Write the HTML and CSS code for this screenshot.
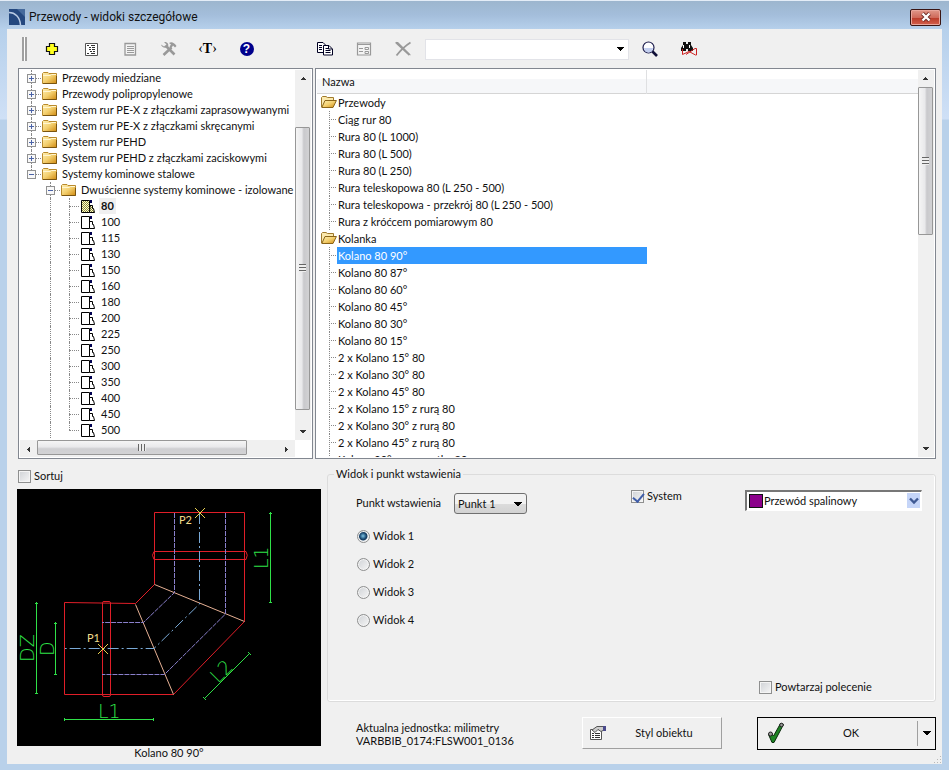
FILE: index.html
```html
<!DOCTYPE html>
<html lang="pl">
<head>
<meta charset="utf-8">
<title>Przewody - widoki szczegółowe</title>
<link rel="stylesheet" href="styles.css">
</head>
<body>
<svg class="defs" aria-hidden="true">
  <defs>
    <linearGradient id="gold" x1="0" y1="0" x2="1" y2="1">
      <stop offset="0" stop-color="#fff0b4"/><stop offset=".5" stop-color="#f3cf6e"/><stop offset="1" stop-color="#d08a10"/>
    </linearGradient>
    <pattern id="hatch" width="2" height="2" patternUnits="userSpaceOnUse">
      <rect width="2" height="2" fill="#fffbd0"/><rect width="1" height="1" fill="#8b8b3c"/><rect x="1" y="1" width="1" height="1" fill="#8b8b3c"/>
    </pattern>
    <symbol id="folder" viewBox="0 0 16 14">
      <path d="M.5 12.500V2.500L1.500 1.500H6L7 2.500H14.500V12.500Z" fill="url(#gold)" stroke="#b98a2c"/>
      <path d="M1 4.500H8L9.500 3.500H14" fill="none" stroke="#fff6d2"/>
      <path d="M1 12.500H14.500V5" fill="none" stroke="#7a5510"/>
    </symbol>
    <symbol id="folder-open" viewBox="0 0 16 14">
      <path d="M.5 12V2.500L1.500 1.500H5L6.500 2.500H12.500V5" fill="#fbe9ae" stroke="#a07a2c"/>
      <path d="M.8 12.500L4 5.500H15.400L12 12.500Z" fill="url(#gold)" stroke="#8a6418"/>
    </symbol>
    <symbol id="part" viewBox="0 0 16 14">
      <path d="M.5 1.500H8.500V13.500H.5Z" fill="#fff" stroke="#000"/>
      <path d="M9 1H11V4H9Z" fill="#000050"/>
      <path d="M9 6.500H11.500V9.500H12.500L13.500 13.500H8.500" fill="none" stroke="#000"/>
    </symbol>
    <symbol id="part-on" viewBox="0 0 16 14">
      <path d="M.5 1.500H8.500V13.500H.5Z" fill="url(#hatch)" stroke="#000"/>
      <path d="M9 1H11V4H9Z" fill="#000050"/>
      <path d="M9 6.500H11.500V9.500H12.500L13.500 13.500H8.500Z" fill="url(#hatch)" stroke="#000"/>
    </symbol>
  </defs>
</svg>

<div class="window">
  <header class="titlebar">
    <svg class="app-icon" viewBox="0 0 16 16" aria-hidden="true"><rect width="16" height="16" fill="#24487f"/><path d="M0 0H16V8L8 0Z" fill="#456a9c"/><path d="M0 3.500C6 3.500 11 8 11.500 16" fill="none" stroke="#b9cbe4" stroke-width="1.500"/></svg>
    <h1>Przewody - widoki szczegółowe</h1>
    <button class="close" aria-label="Zamknij"><svg viewBox="0 0 12 10" width="12" height="10"><path d="M2.500 1.500L9.500 8.500M9.500 1.500L2.500 8.500" stroke="#6b2a24" stroke-width="4"/><path d="M2.500 1.500L9.500 8.500M9.500 1.500L2.500 8.500" stroke="#fff" stroke-width="2.400"/></svg></button>
  </header>

  <main class="client">
    <div class="toolbar" role="toolbar" aria-label="Narzędzia">
      <span class="grip"></span>
      <button class="tool" aria-label="Dodaj"><svg viewBox="0 0 16 16"><path d="M5.500 2.500H10.500V5.500H13.500V10.500H10.500V13.500H5.500V10.500H2.500V5.500H5.500Z" fill="#ffff1e" stroke="#111" stroke-width="1.200"/></svg></button>
      <button class="tool" aria-label="Widok drzewa"><svg viewBox="0 0 16 16"><path d="M2.500 2.500H14.500V14.500H2.500Z" fill="#fff" stroke="#555"/><path d="M4 4.500H6M6 6.500H8M9 6.500H12M6 8.500H8M9 8.500H12M7 10.500H9M10 10.500H12M4 12.500H6M8 12.500H12M8 4.500H12" stroke="#333"/></svg></button>
      <button class="tool" aria-label="Lista" disabled><svg viewBox="0 0 16 16"><path d="M3 2.500H13.500V14H3Z" fill="#f4f4f4" stroke="#999" stroke-width="1.300"/><path d="M5 5.500H12M5 7.500H12M5 9.500H12M5 11.500H12" stroke="#999"/></svg></button>
      <button class="tool" aria-label="Ustawienia" disabled><svg viewBox="0 0 16 16"><path d="M5 5L13.500 13.500M10.500 6.500L2.500 14" stroke="#999" stroke-width="2.600"/><path d="M0 3.500L3 5.500L5.500 3.500L3 1C6.500 .5 8 3 7 6C4 7.500 .5 6.500 0 3.500Z" fill="#999"/><path d="M8 2C10 .5 13 1 15.500 5L14 6.500L12 4.500L10.500 7L8.500 5.500L10 3.500Z" fill="#999"/></svg></button>
      <button class="tool tool-text" aria-label="Tekst">‹<b>T</b>›</button>
      <button class="tool tool-help" aria-label="Pomoc"><b>?</b></button>
      <span class="tool-space"></span>
      <button class="tool" aria-label="Kopiuj"><svg viewBox="0 0 16 16"><path d="M.5 1.500H6L8.500 4V11.500H.5Z" fill="#fff" stroke="#002"/><path d="M6.500 4.500H12L15.500 8V14H6.500Z" fill="#fff" stroke="#002"/><path d="M2 4.500H5M2 6.500H5M2 8.500H5M8.500 7.500H11M8.500 9.500H13.500M8.500 11.500H13.500M11.500 4.500V8H15" fill="none" stroke="#002"/></svg></button>
      <button class="tool" aria-label="Formularz" disabled><svg viewBox="0 0 16 16"><path d="M1.500 2H14.500V14H1.500Z" fill="#f4f4f4" stroke="#999" stroke-width="1.200"/><path d="M2 3.500H14M3 7.500H7M3 10.500H7M9 6.500H12.500V8.500H9ZM9 10.500H12.500V12.500H9Z" fill="none" stroke="#999"/></svg></button>
      <button class="tool" aria-label="Usuń" disabled><svg viewBox="0 0 16 16"><path d="M0 1L3 1L15.500 13.500V14.500L12 12Z" fill="#999"/><path d="M1 1.500L14.500 14M15.500 1.500C10 5 5 10 1.500 14.500" fill="none" stroke="#999" stroke-width="1.800"/></svg></button>
      <select class="search" aria-label="Szukaj"><option></option></select>
      <button class="tool" aria-label="Znajdź"><svg viewBox="0 0 16 16"><circle cx="6.500" cy="6.500" r="5.500" fill="#fdfdff" stroke="#1c1c4c" stroke-width="1.200"/><path d="M2 7A4.500 4.500 0 0 0 11 7Z" fill="#c3cff0"/><path d="M10.500 10.500L15 15" stroke="#101038" stroke-width="2.600"/></svg></button>
      <button class="tool" aria-label="Wyczyść wyszukiwanie"><svg viewBox="0 0 16 16"><path d="M2 1H5V3H7V1H10V4L12 7V10H7V8H5V10H0V7L2 4Z" fill="#111"/><path d="M2.500 4V7M8.500 4V7" stroke="#fff"/><path d="M1.500 8V13.500L8 10.500L14.500 14H15.500V7.500H14L5 13.500" fill="none" stroke="#c22"/></svg></button>
    </div>

    <section class="panels">
      <div class="panel tree-panel">
        <div class="viewport">
          <ul class="tree" role="tree">
            <li><i class="cell v"><b class="box plus"></b></i><svg><use href="#folder"/></svg><span>Przewody miedziane</span></li>
            <li><i class="cell v"><b class="box plus"></b></i><svg><use href="#folder"/></svg><span>Przewody polipropylenowe</span></li>
            <li><i class="cell v"><b class="box plus"></b></i><svg><use href="#folder"/></svg><span>System rur PE-X z złączkami zaprasowywanymi</span></li>
            <li><i class="cell v"><b class="box plus"></b></i><svg><use href="#folder"/></svg><span>System rur PE-X z złączkami skręcanymi</span></li>
            <li><i class="cell v"><b class="box plus"></b></i><svg><use href="#folder"/></svg><span>System rur PEHD</span></li>
            <li><i class="cell v"><b class="box plus"></b></i><svg><use href="#folder"/></svg><span>System rur PEHD z złączkami zaciskowymi</span></li>
            <li><i class="cell end"><b class="box"></b></i><svg><use href="#folder"/></svg><span>Systemy kominowe stalowe</span></li>
            <li><i class="cell blank"></i><i class="cell v"><b class="box"></b></i><svg><use href="#folder"/></svg><span>Dwuścienne systemy kominowe - izolowane</span></li>
            <li class="leaf current"><i class="cell blank"></i><i class="cell line"></i><i class="cell v"></i><svg><use href="#part-on"/></svg><span>80</span></li>
            <li class="leaf"><i class="cell blank"></i><i class="cell line"></i><i class="cell v"></i><svg><use href="#part"/></svg><span>100</span></li>
            <li class="leaf"><i class="cell blank"></i><i class="cell line"></i><i class="cell v"></i><svg><use href="#part"/></svg><span>115</span></li>
            <li class="leaf"><i class="cell blank"></i><i class="cell line"></i><i class="cell v"></i><svg><use href="#part"/></svg><span>130</span></li>
            <li class="leaf"><i class="cell blank"></i><i class="cell line"></i><i class="cell v"></i><svg><use href="#part"/></svg><span>150</span></li>
            <li class="leaf"><i class="cell blank"></i><i class="cell line"></i><i class="cell v"></i><svg><use href="#part"/></svg><span>160</span></li>
            <li class="leaf"><i class="cell blank"></i><i class="cell line"></i><i class="cell v"></i><svg><use href="#part"/></svg><span>180</span></li>
            <li class="leaf"><i class="cell blank"></i><i class="cell line"></i><i class="cell v"></i><svg><use href="#part"/></svg><span>200</span></li>
            <li class="leaf"><i class="cell blank"></i><i class="cell line"></i><i class="cell v"></i><svg><use href="#part"/></svg><span>225</span></li>
            <li class="leaf"><i class="cell blank"></i><i class="cell line"></i><i class="cell v"></i><svg><use href="#part"/></svg><span>250</span></li>
            <li class="leaf"><i class="cell blank"></i><i class="cell line"></i><i class="cell v"></i><svg><use href="#part"/></svg><span>300</span></li>
            <li class="leaf"><i class="cell blank"></i><i class="cell line"></i><i class="cell v"></i><svg><use href="#part"/></svg><span>350</span></li>
            <li class="leaf"><i class="cell blank"></i><i class="cell line"></i><i class="cell v"></i><svg><use href="#part"/></svg><span>400</span></li>
            <li class="leaf"><i class="cell blank"></i><i class="cell line"></i><i class="cell v"></i><svg><use href="#part"/></svg><span>450</span></li>
            <li class="leaf"><i class="cell blank"></i><i class="cell line"></i><i class="cell end"></i><svg><use href="#part"/></svg><span>500</span></li>
          </ul>
        </div>
        <div class="bar vertical tree-v"><i class="arrow up"></i><div class="track"><div class="thumb"><i></i></div></div><i class="arrow down"></i></div>
        <div class="bar horizontal"><i class="arrow left"></i><div class="track"><div class="thumb"><i></i></div></div><i class="arrow right"></i></div>
      </div>

      <div class="panel list-panel">
        <div class="viewport">
          <div class="list-head"><span>Nazwa</span></div>
          <ul class="list">
            <li class="group"><svg><use href="#folder-open"/></svg><span>Przewody</span></li>
            <li><i></i><span>Ciąg rur 80</span></li>
            <li><i></i><span>Rura 80 (L 1000)</span></li>
            <li><i></i><span>Rura 80 (L 500)</span></li>
            <li><i></i><span>Rura 80 (L 250)</span></li>
            <li><i></i><span>Rura teleskopowa 80 (L 250 - 500)</span></li>
            <li><i></i><span>Rura teleskopowa - przekrój 80 (L 250 - 500)</span></li>
            <li><i></i><span>Rura z króćcem pomiarowym 80</span></li>
            <li class="group"><svg><use href="#folder-open"/></svg><span>Kolanka</span></li>
            <li class="selected"><i></i><span>Kolano 80 90°</span></li>
            <li><i></i><span>Kolano 80 87°</span></li>
            <li><i></i><span>Kolano 80 60°</span></li>
            <li><i></i><span>Kolano 80 45°</span></li>
            <li><i></i><span>Kolano 80 30°</span></li>
            <li><i></i><span>Kolano 80 15°</span></li>
            <li><i></i><span>2 x Kolano 15° 80</span></li>
            <li><i></i><span>2 x Kolano 30° 80</span></li>
            <li><i></i><span>2 x Kolano 45° 80</span></li>
            <li><i></i><span>2 x Kolano 15° z rurą 80</span></li>
            <li><i></i><span>2 x Kolano 30° z rurą 80</span></li>
            <li><i></i><span>2 x Kolano 45° z rurą 80</span></li>
            <li><i></i><span>Kolano 90° z wyczystką 80</span></li>
          </ul>
        </div>
        <div class="bar vertical list-v"><i class="arrow up"></i><div class="track"><div class="thumb"><i></i></div></div><i class="arrow down"></i></div>
      </div>
    </section>

    <section class="lower">
      <div class="preview">
        <label class="check"><input type="checkbox">Sortuj</label>
        <svg class="drawing" viewBox="0 0 304 257" role="img" aria-label="Kolano 80 90°">
          <rect width="304" height="257" fill="#000"/>
          <g fill="none" stroke="#e01e28">
            <path d="M137.500 95.500V23.500H227.500V132.500L156.500 205.500H47.500V113.500L118.500 114.500L137.500 95.500"/>
            <path d="M137.500 62.500H229Q231.500 66 229 70.500H137Q134 66 137 62.500Z"/>
            <path d="M85.500 113.500Q85.500 112.500 87 112.500H92Q93.500 112.500 93.500 114V206Q93.500 207.500 92 207.500H87Q85.500 207.500 85.500 206Z"/>
          </g>
          <path d="M137.500 95.500L227.500 132.500M118.500 115.500L156.500 205.500" stroke="#e6b094"/>
          <g fill="none" stroke="#8a80cc" stroke-dasharray="5 1">
            <path d="M157.500 24V103.500L126.500 133.500H85"/>
            <path d="M208.500 24V125L147.500 185.500H85"/>
          </g>
          <path d="M182.500 24V115L137 159.500H48" fill="none" stroke="#79a9d6" stroke-dasharray="11 3 2 3"/>
          <g fill="none" stroke="#2fe048">
            <path d="M253.500 23V114M252 24.500H255M252 113.500H255"/>
            <path d="M19.500 113V205M18 114.500H21M18 204.500H21"/>
            <path d="M38.500 133V186M37 134.500H40M37 185.500H40"/>
            <path d="M47 230.500H137M47.500 229V232M136.500 229V232"/>
            <path d="M187 210L233 164M186 208L189 211M231 163L234 166"/>
          </g>
          <path d="M178 19L188 29M188 19L178 29M81 155L91 165M91 155L81 165" stroke="#e8cf50"/>
          <g class="dims">
            <text x="81" y="229">L1</text>
            <text transform="translate(251 80) rotate(-90)">L1</text>
            <text transform="translate(17 173) rotate(-90)">DZ</text>
            <text transform="translate(37 167) rotate(-90)">D</text>
            <text transform="translate(201 195) rotate(-45)">L2</text>
          </g>
          <g class="points"><text x="162" y="35">P2</text><text x="70" y="153">P1</text></g>
        </svg>
        <p class="caption">Kolano 80 90°</p>
      </div>

      <div class="options">
        <fieldset class="view-box">
          <legend>Widok i punkt wstawienia</legend>
          <div class="view-grid">
            <label class="point-label" for="point">Punkt wstawienia</label>
            <select id="point" class="point"><option>Punkt 1</option><option>Punkt 2</option></select>
            <label class="check"><input type="checkbox" checked>System</label>
            <div class="system">
              <select aria-label="System"><option>Przewód spalinowy</option></select>
              <span class="swatch"></span>
              <span class="drop"><svg viewBox="0 0 10 8" width="10" height="8"><path d="M1 1.500L5 5.500L9 1.500" fill="none" stroke="#3f5a94" stroke-width="2.400"/></svg></span>
            </div>
          </div>
          <div class="views">
            <label class="check"><input type="radio" name="view" checked>Widok 1</label>
            <label class="check"><input type="radio" name="view">Widok 2</label>
            <label class="check"><input type="radio" name="view">Widok 3</label>
            <label class="check"><input type="radio" name="view">Widok 4</label>
          </div>
          <label class="check repeat"><input type="checkbox">Powtarzaj polecenie</label>
        </fieldset>
        <footer class="actions">
          <p>Aktualna jednostka: milimetry<br>VARBBIB_0174:FLSW001_0136</p>
          <button class="style-btn">
            <svg viewBox="0 0 18 16" width="18" height="16"><path d="M1.500 4.500H12.500V14.500H1.500Z" fill="#fff" stroke="#555"/><path d="M3 8.500H5M3 10.500H5M3 12.500H5M6 8.500H11M6 10.500H11M6 12.500H11" stroke="#333"/><path d="M3 5L8 1.500H15V5L12 6.500L9 4.500L6 7.500Z" fill="#ccc" stroke="#555"/><path d="M14 1H17V6H14Z" fill="#4b4b8c"/></svg>
            <span>Styl obiektu</span>
          </button>
          <div class="ok">
            <button class="ok-main">
              <svg viewBox="0 0 18 22" width="18" height="22"><path d="M1.500 12.500L4 10.500L6.500 14L13.500 1.500L16.500 2.500L7 20.500H5Z" fill="#1e8424" stroke="#0a2a0c"/><circle cx="3.500" cy="12" r="2" fill="#999" stroke="#222"/><circle cx="14.500" cy="3" r="1.800" fill="#999" stroke="#222"/></svg>
              <span>OK</span>
            </button>
            <button class="ok-more" aria-label="Więcej"><i></i></button>
          </div>
        </footer>
      </div>
    </section>
    <span class="resize"></span>
  </main>
</div>
</body>
</html>
```
FILE: styles.css
```css
* { box-sizing: border-box; }

body {
  margin: 0;
  font: 11px/16px Lato, "Liberation Sans", sans-serif;
  color: #111;
}

ul, p, h1 { margin: 0; padding: 0; list-style: none; }
button, select { font: inherit; color: inherit; margin: 0; padding: 0; border: 0; background: none; }
input { margin: 0; }
.defs { position: absolute; width: 0; height: 0; }

/* window frame */
.window {
  display: flex;
  flex-direction: column;
  height: 100vh;
  padding: 0 7px 6px;
  border-top: 1px solid #e4edf7;
  background: linear-gradient(#9db6ce 0, #a4bedb 14px, #b6d0eb 28px, #cfe0f6 118px, #b9d1ea 119px);
}
.titlebar { display: flex; align-items: center; flex: none; height: 28px; padding: 4px 1px 0 2px; }
.app-icon { width: 16px; height: 16px; margin-right: 4px; }
.titlebar h1 { flex: 1; font: 12px/16px Roboto, "Noto Sans", sans-serif; }
.close {
  display: flex; align-items: center; justify-content: center;
  width: 31px; height: 17px;
  border: 1px solid #3a1512; border-radius: 2px;
  box-shadow: inset 0 0 0 1px #e9a69b;
  background: linear-gradient(#e0988a 0, #cf6a5a 50%, #b93a28 51%, #d4604c 100%);
}
.client { position: relative; display: flex; flex-direction: column; flex: 1; min-height: 0; background: #f0f0f0; }

/* toolbar */
.toolbar { display: flex; align-items: center; flex: none; height: 39px; padding: 1px 8px 0 15px; }
.grip { width: 5px; height: 24px; margin-right: 5px; border: solid #a0a0a0; border-width: 0 2px; background: #fff; }
.tool { display: flex; align-items: center; justify-content: center; width: 39px; height: 32px; }
.tool svg { width: 16px; height: 16px; fill: none; }
.tool-space { width: 39px; }
.tool-text { font: 14px/16px "Liberation Serif", serif; color: #000; }
.tool-help b { width: 14px; height: 14px; border-radius: 50%; background: #00008c; color: #fff; font: bold 12px/14px "Liberation Sans", sans-serif; }
.search { width: 204px; height: 21px; margin: 0 1px 0 3px; border: 1px solid #e2e3e8; appearance: none; background: conic-gradient(from -45deg at 50% 100%, #000 90deg, transparent 0) right 4px center / 8px 4px no-repeat, #fff; }

/* panels */
.panels { display: grid; grid-template-columns: 295fr 621fr; gap: 2px; flex: 1; min-height: 0; padding: 0 6px 0 11px; }
.panel { display: grid; grid-template-columns: minmax(0, 1fr) 16px; min-height: 0; border: 1px solid #828790; padding: 1px; background: #fff; }
.tree-panel { grid-template-rows: minmax(0, 1fr) 17px; }
.viewport { overflow: hidden; min-height: 0; white-space: nowrap; }

.tree { padding-left: 2px; }
.tree li { display: flex; height: 16px; }
.tree svg { flex: none; width: 16px; height: 14px; margin: 1px 4px 0 1px; }
.leaf svg { margin-left: 2px; }
.current span { padding: 0 2px; margin-left: -2px; background: #f0f0f0; font-weight: bold; }
.cell { position: relative; flex: none; width: 19px; }
.v::before, .end::before, .line::before { content: ""; position: absolute; left: 9px; top: 0; bottom: 0; border-left: 1px dotted #888; }
.end::before { bottom: 8px; }
.v::after, .end::after { content: ""; position: absolute; left: 9px; right: 0; top: 8px; border-top: 1px dotted #888; }
.box { position: absolute; z-index: 1; left: 5px; top: 4px; width: 9px; height: 9px; border: 1px solid #919191; background: linear-gradient(#4b63a7, #4b63a7) center / 5px 1px no-repeat, #f8f8f8; }
.plus { background: linear-gradient(#4b63a7, #4b63a7) center / 5px 1px no-repeat, linear-gradient(#4b63a7, #4b63a7) center / 1px 5px no-repeat, #f8f8f8; }

.list-head { height: 24px; border-bottom: 1px solid #d5d5d5; background: linear-gradient(#fff 40%, #f6f7f9 41%); line-height: 24px; }
.list-head span { display: block; width: 330px; padding-left: 5px; border-right: 1px solid #dfe0e2; }
.list { padding-left: 4px; }
.list li { display: flex; width: 326px; height: 17px; line-height: 17px; }
.list svg { flex: none; width: 16px; height: 14px; margin-top: 1px; }
.list i { position: relative; flex: none; width: 16px; }
.list i::before { content: ""; position: absolute; left: 8px; top: 0; bottom: 0; border-left: 1px dotted #888; }
.list i::after { content: ""; position: absolute; left: 8px; right: 1px; top: 8px; border-top: 1px dotted #888; }
.list span { flex: 1; padding-left: 1px; }
.selected span { background: #3399ff; color: #fff; }

/* scroll bars */
.bar { display: flex; background: #f0f0f0; }
.vertical { flex-direction: column; }
.arrow { flex: none; width: 17px; height: 17px; }
.vertical .arrow { width: 100%; }
.up { background: conic-gradient(from 135deg at 50% 0, #333 90deg, transparent 0) center / 6px 3px no-repeat; }
.down { background: conic-gradient(from -45deg at 50% 100%, #333 90deg, transparent 0) center / 6px 3px no-repeat; }
.left { background: conic-gradient(from 45deg at 0 50%, #333 90deg, transparent 0) center / 3px 6px no-repeat; }
.right { background: conic-gradient(from 225deg at 100% 50%, #333 90deg, transparent 0) center / 3px 6px no-repeat; }
.track { flex: 1; min-height: 0; }
.thumb { display: flex; align-items: center; justify-content: center; border: 1px solid #979797; border-radius: 1px; }
.vertical .thumb { width: 15px; background: linear-gradient(90deg, #f5f5f5 0, #e9e9eb 45%, #c9c9cc 60%, #d2d2d4 100%); }
.vertical .thumb i { width: 7px; height: 8px; background: repeating-linear-gradient(#666 0, #666 1px, #eee 1px, #eee 3px); }
.tree-v .thumb { position: relative; top: 12%; height: 84%; }
.list-v .thumb { height: 42%; }
.horizontal .thumb { width: 87%; height: 15px; background: linear-gradient(#f5f5f5 0, #e9e9eb 45%, #cfcfd2 60%, #d2d2d4 100%); }
.horizontal .thumb i { width: 8px; height: 7px; background: repeating-linear-gradient(90deg, #666 0, #666 1px, #eee 1px, #eee 3px); }

/* lower half */
.lower { display: grid; grid-template-columns: 304fr 609fr; gap: 6px; flex: none; padding: 9px 6px 0 10px; }
.preview .check { padding-left: 1px; }
.check { display: flex; align-items: center; gap: 3px; height: 16px; }
.drawing { display: block; width: 100%; margin-top: 5px; overflow: visible; }
.dims { font: 200 19px "DejaVu Sans", "DejaVu Sans Light", sans-serif; fill: #2fe048; }
.points { font: 11px Lato, sans-serif; fill: #f2dc8c; }
.caption { text-align: center; height: 18px; line-height: 14px; }

input[type="checkbox"], input[type="radio"] { appearance: none; width: 13px; height: 13px; border: 1px solid #8e8f8f; }
input[type="checkbox"] { box-shadow: inset 0 0 0 1px #f4f4f4; background: linear-gradient(135deg, #cfd2d6, #f6f6f6); position: relative; }
input[type="checkbox"]:checked::after { content: ""; position: absolute; left: 3px; top: 0; width: 5px; height: 9px; border: solid #3f5da8; border-width: 0 2px 2px 0; transform: rotate(40deg); }
input[type="radio"] { border-radius: 50%; box-shadow: inset 0 0 0 1px #f4f4f4; background: linear-gradient(135deg, #cfd2d6, #f6f6f6); }
input[type="radio"]:checked { background: radial-gradient(circle at 5px 5px, #7fc4e4 0, #1d4f78 3px, #14375a 4px, #e8eef2 5px); }

.options { display: flex; flex-direction: column; }
.view-box { min-width: 0; margin: -2px 0 0; padding: 0 13px 6px 28px; border: 1px solid #dcdcdc; border-radius: 3px; box-shadow: inset 0 -1px #fff, inset -1px 0 #fff; }
.view-box legend { margin-left: -22px; padding: 0 2px; }
.view-grid { display: grid; grid-template-columns: 98px 177fr 114fr 177fr; align-items: start; padding-top: 6px; }
.point-label { padding-top: 7px; }
.point { width: 73px; height: 21px; margin-top: 5px; padding-left: 3px; border: 1px solid #707070; border-radius: 3px; appearance: none; background: conic-gradient(from -45deg at 50% 100%, #000 90deg, transparent 0) right 4px center / 8px 4px no-repeat, linear-gradient(#f2f2f2 50%, #dcdcdc 51%, #d2d2d2); }
.system { position: relative; margin-top: 2px; }
.system select { display: block; width: 100%; height: 21px; padding-left: 17px; border: solid; border-width: 2px 1px 1px 2px; border-color: #777 #fff #fff #777; appearance: none; background: #fff; }
.swatch { position: absolute; left: 4px; top: 4px; width: 14px; height: 14px; border: 1px solid #111; background: #8b008b; }
.drop { position: absolute; right: 2px; top: 3px; display: flex; align-items: center; justify-content: center; width: 13px; height: 15px; background: #c5d5f8; }
.views { display: grid; gap: 12px; padding: 14px 0 0 1px; }
.repeat { width: 163px; margin: 51px 0 0 auto; }

.actions { display: flex; align-items: center; flex: 1; padding-left: 29px; }
.actions p { flex: 1; padding-top: 2px; line-height: 13px; }
.style-btn { display: flex; align-items: center; width: 140px; height: 32px; padding: 0 0 0 6px; border: 1px solid; border-color: #fff #a0a0a0 #a0a0a0 #fff; margin-right: 35px; }
.style-btn span, .ok-main span { flex: 1; text-align: center; }
.ok { display: flex; width: 179px; height: 33px; border: 1px solid #000; }
.ok-main { display: flex; align-items: center; flex: 1; padding-left: 9px; }
.ok-more { width: 18px; margin: 3px 0; border-left: 1px solid #a0a0a0; }
.ok-more i { display: block; width: 8px; height: 4px; margin: auto; background: conic-gradient(from -45deg at 50% 100%, #000 90deg, transparent 0); }
.resize { position: absolute; right: 1px; bottom: 1px; width: 8px; height: 8px; background: radial-gradient(#b8b8b8 1px, transparent 1px) 0 0 / 3px 3px; clip-path: polygon(100% 0, 100% 100%, 0 100%); }
```
